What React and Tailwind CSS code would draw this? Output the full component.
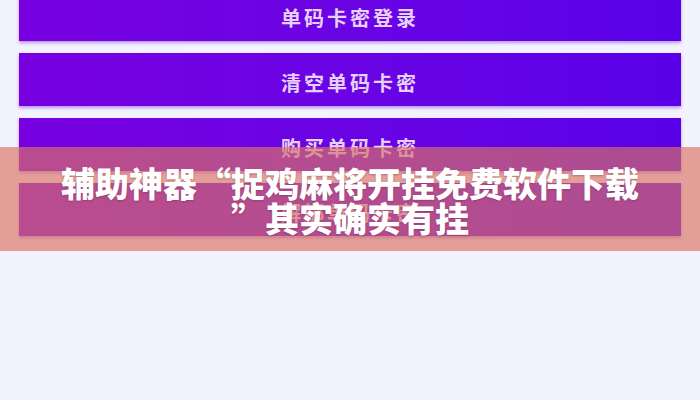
import React from "react";

const buttons = ["单码卡密登录", "清空单码卡密", "购买单码卡密", "解绑单码卡密"];

export default function App() {
  return (
    <div
      lang="zh-CN"
      className="relative w-[700px] h-[400px] overflow-hidden bg-[#f2f3fc]"
      style={{ fontFamily: '"Noto Sans CJK SC", "Noto Sans", sans-serif' }}
    >
      <div className="flex flex-col gap-[12px] px-[19px] -mt-[12px]">
        {buttons.map((b) => (
          <div
            key={b}
            className="h-[53px] flex items-center justify-center pt-[6px] bg-gradient-to-r from-[#7800e0] to-[#5a00e8] shadow-[0_2px_3px_rgba(150,80,230,0.6)] text-[#e6d0fa] text-[20px] font-bold tracking-[3px]"
          >
            {b}
          </div>
        ))}
      </div>

      <div className="absolute left-0 right-0 top-[147px] h-[104px] bg-[rgba(218,116,100,0.66)] flex flex-col items-center justify-center pt-[2px]">
        <div className="text-white text-[34px] leading-[35px] font-black text-center [text-shadow:0_1px_2px_rgba(80,20,40,0.3)]">
          <div>辅助神器“捉鸡麻将开挂免费软件下载</div>
          <div>”其实确实有挂</div>
        </div>
      </div>
    </div>
  );
}
